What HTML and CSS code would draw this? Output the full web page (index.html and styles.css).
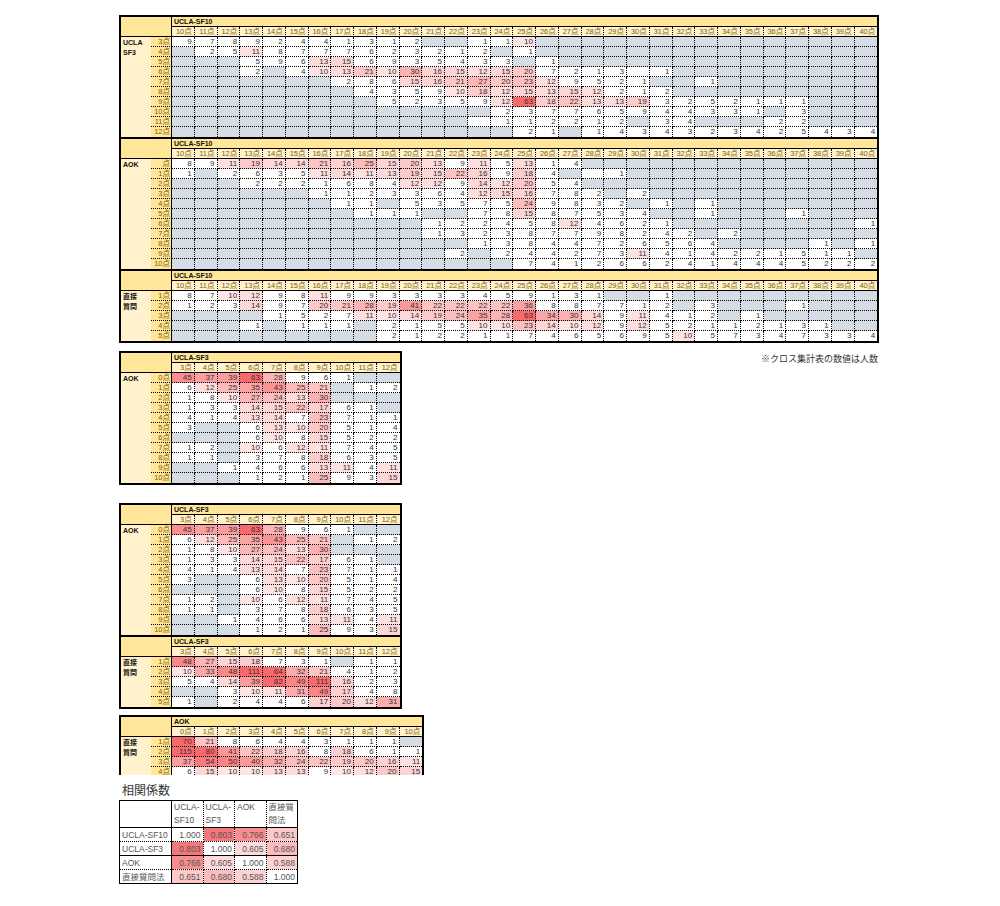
FILE: index.html
```html
<!DOCTYPE html>
<html lang="ja">
<head>
<meta charset="utf-8">
<title>クロス集計表</title>
<link rel="stylesheet" href="styles.css">
</head>
<body>
<div class="page">
  <div class="xt" id="t1"></div>
  <div class="mid">
    <div class="xt" id="t2"></div>
    <p class="note">※クロス集計表の数値は人数</p>
  </div>
  <div class="xt gap3" id="t3"></div>
  <div class="xt gap4 cut" id="t4"></div>
  <p class="corr-title">相関係数</p>
  <table class="corr">
    <colgroup><col class="cl"><col class="cv"><col class="cv"><col class="cv"><col class="cv"></colgroup>
    <tr class="ch"><th></th><th>UCLA-<br>SF10</th><th>UCLA-<br>SF3</th><th>AOK</th><th>直接質<br>問法</th></tr>
    <tr><th>UCLA-SF10</th><td>1.000</td><td class="h1">0.803</td><td class="h2">0.766</td><td class="h4">0.651</td></tr>
    <tr class="sb"><th>UCLA-SF3</th><td class="h1">0.803</td><td>1.000</td><td class="h5">0.605</td><td class="h3">0.680</td></tr>
    <tr><th>AOK</th><td class="h2">0.766</td><td class="h5">0.605</td><td>1.000</td><td class="h6">0.588</td></tr>
    <tr><th>直接質問法</th><td class="h4">0.651</td><td class="h3">0.680</td><td class="h6">0.588</td><td>1.000</td></tr>
  </table>
</div>
<script src="script.js"></script>
</body>
</html>
```
FILE: styles.css
```css
* { box-sizing: border-box; }
body {
  margin: 0;
  background: #fff;
  font-family: "Liberation Sans", "Noto Sans CJK JP", sans-serif;
  color: #333;
}
.page { padding: 15px 0 20px 119px; }

.xt {
  display: flex;
  flex-direction: column;
  width: max-content;
  border: 2px solid #000;
  background: #fff;
}
.block { display: grid; grid-auto-rows: 10px; }
.block + .block { border-top: 2px solid #000; }
.c31 { grid-template-columns: 30px 21px repeat(31, 22.75px); }
.c10 { grid-template-columns: 30px 21px repeat(10, 22.75px); }
.c11 { grid-template-columns: 30px 21px repeat(11, 22.75px); }

.corner {
  grid-column: 1 / span 2;
  grid-row: 1 / span 2;
  background: #ffe699;
  border-right: 1px solid #000;
  border-bottom: 1px solid #000;
}
.title {
  grid-column: 3 / -1;
  grid-row: 1;
  background: #ffe699;
  border-bottom: 1px solid #000;
  font-weight: bold;
  font-size: 7px;
  line-height: 9px;
  padding-left: 2px;
  color: #111;
}
.hd {
  background: #fff2cc;
  border-right: 1px dotted #000;
  border-bottom: 1px solid #000;
  font-size: 7.5px;
  line-height: 9px;
  text-align: right;
  padding-right: 2px;
  color: #7f6000;
  white-space: nowrap;
}
.grp {
  grid-column: 1;
  background: #fff2cc;
  font-weight: bold;
  font-size: 7px;
  line-height: 10px;
  padding: 1px 0 0 2px;
  color: #111;
}
.s4 { grid-row: 3 / span 4; }
.s5 { grid-row: 3 / span 5; }
.s10 { grid-row: 3 / span 10; }
.s11 { grid-row: 3 / span 11; }
.rl {
  background: #ffe699;
  border-right: 1px solid #000;
  border-bottom: 1px dotted #000;
  font-size: 7.5px;
  line-height: 9px;
  text-align: right;
  padding-right: 1px;
  color: #7f6000;
  white-space: nowrap;
}
.cell {
  border-right: 1px dotted #000;
  border-bottom: 1px dotted #000;
  font-size: 8px;
  line-height: 9px;
  text-align: right;
  padding-right: 2px;
  color: #333;
  background: #fff;
}
.gray { background: #d6dce4; }
.lc { border-right: 0; }
.lr { border-bottom: 0; }

.mid {
  display: flex;
  justify-content: space-between;
  align-items: flex-start;
  width: 760px;
  margin-top: 8px;
}
.note {
  margin: 3px 1px 0 0;
  font-size: 9px;
  line-height: 11px;
  color: #333;
}
.gap3 { margin-top: 18px; }
.gap4 { margin-top: 6px; }
.cut { height: 60px; overflow: hidden; border-bottom: 0; }

.corr-title {
  margin: 9px 0 1px 3px;
  font-size: 12px;
  line-height: 15px;
  color: #333;
}
.corr {
  border-collapse: collapse;
  table-layout: fixed;
  width: 178px;
  border: 1px solid #000;
  font-size: 8.5px;
  color: #555;
}
.corr .cl { width: 52px; }
.corr .cv { width: 31.5px; }
.corr th, .corr td {
  border: 1px dotted #000;
  padding: 0 2px;
  height: 14px;
  line-height: 12px;
  font-weight: normal;
  white-space: nowrap;
  overflow: hidden;
}
.corr th { text-align: left; }
.corr td { text-align: right; }
.corr tr > :first-child { border-right: 1px solid #000; }
.corr .ch th {
  height: 23px;
  vertical-align: top;
  padding-top: 0;
  line-height: 13px;
  border-bottom: 1px solid #000;
}
.corr .sb th, .corr .sb td { border-bottom: 1px solid #000; }
.h1 { background: #f6777a; }
.h2 { background: #f88c8e; }
.h3 { background: #fbbcbd; }
.h4 { background: #fcc8c9; }
.h5 { background: #fdd9d9; }
.h6 { background: #fcd2d3; }
```
FILE: script.js
```js
function range(a, b) { var r = []; for (var i = a; i <= b; i++) r.push(i + '点'); return r; }
function expand(s) {
  var out = [];
  s.split(' ').forEach(function (t) {
    var m = /^g(\d+)$/.exec(t);
    if (m) { for (var i = 0; i < +m[1]; i++) out.push('g'); }
    else out.push(t);
  });
  return out;
}
function heat(v) {
  if (v < 10) return '';
  var t = Math.min(1, (v - 9) / 54);
  t = Math.pow(t, 0.85);
  var r = Math.round(253 - 5 * t), g = Math.round(233 - 128 * t), b = Math.round(233 - 126 * t);
  return 'rgb(' + r + ',' + g + ',' + b + ')';
}
function el(tag, cls, txt) {
  var e = document.createElement(tag);
  e.className = cls;
  if (txt) e.textContent = txt;
  return e;
}

var SF10 = range(10, 40), SF3 = range(3, 12), AOKC = range(0, 10);

var B_SF3_SF10 = { title: 'UCLA-SF10', cols: SF10, group: ['UCLA', 'SF3'], rows: [
  ['3点', '9 7 8 9 2 4 4 1 3 1 2 g g 1 1 10 g15'],
  ['4点', 'g 2 5 11 8 7 7 7 6 2 3 2 1 2 g 1 g15'],
  ['5点', 'g3 5 9 6 13 15 6 9 3 5 4 3 3 g 1 g14'],
  ['6点', 'g3 2 g 4 10 13 21 10 30 16 15 12 15 20 7 2 1 3 . 1 g9'],
  ['7点', 'g7 2 8 6 15 16 21 27 20 23 12 9 5 2 1 g g 1 g7'],
  ['8点', 'g8 4 3 5 9 10 18 12 15 13 15 12 2 1 2 g9'],
  ['9点', 'g9 5 2 3 5 9 12 63 18 22 13 13 19 3 2 5 2 1 1 1 g3'],
  ['10点', 'g14 2 3 7 7 6 5 9 4 4 3 3 1 g 3 g3'],
  ['11点', 'g13 . 1 1 2 2 1 2 g 3 4 g3 2 2 g3'],
  ['12点', 'g15 2 1 g 1 4 3 4 3 2 3 4 2 5 4 3 4']
]};
var B_AOK_SF10 = { title: 'UCLA-SF10', cols: SF10, group: ['AOK'], rows: [
  ['点', '8 9 11 19 14 14 21 16 25 15 20 13 9 11 5 13 1 4 g13'],
  ['1点', '1 g 2 6 3 5 11 14 11 13 19 15 22 16 9 18 4 g . 1 g11'],
  ['2点', 'g3 2 2 2 1 6 8 4 12 12 9 14 12 20 5 4 g13'],
  ['3点', 'g6 1 1 2 3 3 6 4 12 15 16 7 8 2 g 2 g10'],
  ['4点', 'g7 1 1 g 5 3 5 7 5 24 9 8 3 2 g 1 g 1 g7'],
  ['5点', 'g8 1 1 1 g g 7 8 15 8 7 5 3 4 g g 1 g3 1 g3'],
  ['6点', 'g11 1 2 2 4 5 8 12 4 6 2 1 g8 1'],
  ['7点', 'g11 1 3 2 3 8 7 7 9 8 2 4 2 g 2 g6'],
  ['8点', 'g13 1 3 8 4 4 7 2 6 5 6 4 g4 1 g 1'],
  ['9点', 'g12 2 g 2 4 4 2 7 3 11 4 1 4 2 2 1 5 1 1 g'],
  ['10点', 'g15 7 4 1 2 6 6 2 4 1 4 4 4 5 2 2 2']
]};
var B_DQ_SF10 = { title: 'UCLA-SF10', cols: SF10, group: ['直接', '質問'], rows: [
  ['1点', '8 7 10 12 9 8 11 9 9 3 3 3 3 4 5 9 1 3 1 g g 1 g9'],
  ['2点', '1 2 3 14 9 7 20 21 28 19 41 22 22 22 22 36 8 8 7 7 1 2 g 3 g3 1 g3'],
  ['3点', 'g4 1 5 2 7 11 10 14 19 24 35 28 63 34 30 14 9 11 4 1 2 g 1 g5'],
  ['4点', 'g3 1 g 1 1 1 g 2 1 5 5 10 10 23 14 10 12 9 12 5 2 1 1 2 1 3 1 g g'],
  ['5点', 'g9 2 1 2 2 1 1 7 4 6 5 6 9 5 10 5 7 3 4 7 3 3 4']
]};
var B_AOK_SF3 = { title: 'UCLA-SF3', cols: SF3, group: ['AOK'], rows: [
  ['0点', '45 37 39 63 28 9 6 1 g g'],
  ['1点', '6 12 25 35 43 25 21 g 1 2'],
  ['2点', '1 8 10 27 24 13 30 g g g'],
  ['3点', '1 3 3 14 15 22 17 6 1 g'],
  ['4点', '4 1 4 13 14 7 23 7 1 1'],
  ['5点', '3 g g 6 13 10 20 5 1 4'],
  ['6点', 'g g g 6 10 8 15 5 2 2'],
  ['7点', '1 2 g 10 6 12 11 7 4 5'],
  ['8点', '1 1 g 3 7 8 18 6 3 5'],
  ['9点', 'g g 1 4 6 6 13 11 4 11'],
  ['10点', 'g g g 1 2 1 25 9 3 15']
]};
var B_DQ_SF3 = { title: 'UCLA-SF3', cols: SF3, group: ['直接', '質問'], rows: [
  ['1点', '48 27 15 18 7 3 1 g 1 1'],
  ['2点', '10 33 48 111 64 32 21 4 1 2'],
  ['3点', '5 4 14 39 82 49 111 16 2 3'],
  ['4点', 'g g 3 10 11 31 49 17 4 8'],
  ['5点', '1 g 2 4 4 6 17 20 12 31']
]};
var B_DQ_AOK = { title: 'AOK', cols: AOKC, group: ['直接', '質問'], rows: [
  ['1点', '70 21 8 6 4 4 3 1 1 1 g'],
  ['2点', '115 80 41 22 18 16 8 18 6 1 1'],
  ['3点', '37 54 50 40 32 24 22 19 20 16 11'],
  ['4点', '6 15 10 10 13 13 9 10 12 20 15']
]};

function buildBlock(b) {
  var n = b.cols.length;
  var g = el('div', 'block c' + n);
  g.appendChild(el('div', 'corner'));
  g.appendChild(el('div', 'title', b.title));
  b.cols.forEach(function (c, i) {
    g.appendChild(el('div', 'hd' + (i === n - 1 ? ' lc' : ''), c));
  });
  var grp = el('div', 'grp s' + b.rows.length);
  b.group.forEach(function (line, i) {
    if (i) grp.appendChild(document.createElement('br'));
    grp.appendChild(document.createTextNode(line));
  });
  g.appendChild(grp);
  b.rows.forEach(function (row, ri) {
    var lastRow = ri === b.rows.length - 1;
    g.appendChild(el('div', 'rl' + (lastRow ? ' lr' : ''), row[0]));
    expand(row[1]).forEach(function (tok, ci) {
      var cls = 'cell';
      if (ci === n - 1) cls += ' lc';
      if (lastRow) cls += ' lr';
      if (tok === 'g') cls += ' gray';
      var c = el('div', cls);
      if (tok !== 'g' && tok !== '.') {
        c.textContent = tok;
        var bg = heat(+tok);
        if (bg) c.style.backgroundColor = bg;
      }
      g.appendChild(c);
    });
  });
  return g;
}
function build(id, blocks) {
  var w = document.getElementById(id);
  blocks.forEach(function (b) { w.appendChild(buildBlock(b)); });
}
build('t1', [B_SF3_SF10, B_AOK_SF10, B_DQ_SF10]);
build('t2', [B_AOK_SF3]);
build('t3', [B_AOK_SF3, B_DQ_SF3]);
build('t4', [B_DQ_AOK]);
```
